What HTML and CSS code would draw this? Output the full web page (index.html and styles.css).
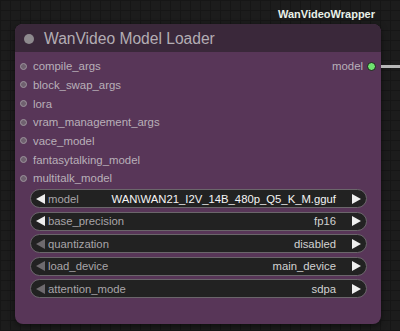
FILE: index.html
```html
<!DOCTYPE html>
<html>
<head>
<meta charset="utf-8">
<link rel="stylesheet" href="styles.css">
</head>
<body>
<div class="canvas">
  <div class="badge-row"><span class="badge">WanVideoWrapper</span></div>
  <div class="node">
    <div class="title"><span class="title-dot"></span><span class="title-text">WanVideo Model Loader</span></div>
    <div class="body">
      <div class="slots">
        <div class="inputs">
          <div class="slot"><span class="dot"></span>compile_args</div>
          <div class="slot"><span class="dot"></span>block_swap_args</div>
          <div class="slot"><span class="dot"></span>lora</div>
          <div class="slot"><span class="dot"></span>vram_management_args</div>
          <div class="slot"><span class="dot"></span>vace_model</div>
          <div class="slot"><span class="dot"></span>fantasytalking_model</div>
          <div class="slot"><span class="dot"></span>multitalk_model</div>
        </div>
        <div class="outputs">
          <div class="slot out">model<span class="odot"></span></div>
        </div>
      </div>
      <div class="widgets">
        <div class="widget"><span class="arr l on"></span><span class="wlabel">model</span><span class="wval bright">WAN\WAN21_I2V_14B_480p_Q5_K_M.gguf</span><span class="arr r"></span></div>
        <div class="widget"><span class="arr l on"></span><span class="wlabel">base_precision</span><span class="wval">fp16</span><span class="arr r"></span></div>
        <div class="widget"><span class="arr l"></span><span class="wlabel">quantization</span><span class="wval">disabled</span><span class="arr r"></span></div>
        <div class="widget"><span class="arr l"></span><span class="wlabel">load_device</span><span class="wval">main_device</span><span class="arr r"></span></div>
        <div class="widget"><span class="arr l"></span><span class="wlabel">attention_mode</span><span class="wval">sdpa</span><span class="arr r"></span></div>
      </div>
    </div>
    <div class="link"></div>
  </div>
</div>
</body>
</html>
```

FILE: styles.css
```css
html, body {
  margin: 0;
  padding: 0;
}
body {
  width: 400px;
  height: 331px;
  overflow: hidden;
  background-color: #1c1c1c;
  background-image:
    linear-gradient(to right, #161616 1px, transparent 1px),
    linear-gradient(to bottom, #161616 1px, transparent 1px);
  background-size: 10px 10px;
  font-family: "Liberation Sans", Arial, sans-serif;
}
.canvas {
  width: 400px;
  height: 331px;
  position: relative;
}
.badge-row {
  height: 24px;
  display: flex;
  justify-content: flex-end;
  align-items: center;
  padding-right: 25px;
  box-sizing: border-box;
}
.badge {
  color: #e8f0e8;
  font-size: 11px;
  font-weight: bold;
  margin-top: 4px;
}
.node {
  position: relative;
  margin-left: 15px;
  width: 366px;
  height: 300px;
  border-radius: 8px;
  background: #583658;
  box-shadow: 0 2px 6px rgba(0,0,0,0.5);
}
.title {
  height: 28px;
  background: #3a283a;
  border-radius: 8px 8px 0 0;
  display: flex;
  align-items: center;
  box-sizing: border-box;
  padding-left: 9px;
}
.title-dot {
  width: 10px;
  height: 10px;
  border-radius: 50%;
  background: #8e8a8e;
  margin-right: 10px;
  margin-top: 1px;
}
.title-text {
  color: #b3adb3;
  font-size: 15.6px;
  margin-top: 1px;
}
.body {
  padding-top: 5px;
}
.slots {
  display: flex;
  justify-content: space-between;
}
.slot {
  height: 18.67px;
  display: flex;
  align-items: center;
  color: #b8b0b8;
  font-size: 11.4px;
}
.inputs .slot {
  padding-left: 5px;
}
.dot {
  width: 5px;
  height: 5px;
  border-radius: 50%;
  border: 1.5px solid #9d949d;
  background: #6e606e;
  margin-right: 6px;
}
.out {
  padding-right: 5px;
}
.odot {
  width: 7px;
  height: 7px;
  border-radius: 50%;
  background: #6fe36f;
  border: 1px solid #1c1c1c;
  margin-left: 4px;
}
.widgets {
  display: flex;
  flex-direction: column;
  gap: 3.5px;
  padding: 1.5px 14px 0 15px;
}
.widget {
  height: 19px;
  box-sizing: border-box;
  border: 1px solid #6b666b;
  border-radius: 10px;
  background: #222222;
  display: flex;
  align-items: center;
  padding: 0 5px 0 5px;
  font-size: 11.3px;
}
.wlabel {
  color: #a9a5a9;
  margin-left: 3px;
}
.wval {
  color: #d2d2d2;
  margin-left: auto;
  margin-right: 16px;
}
.wval.bright {
  color: #f4f4f4;
}
.arr {
  width: 0;
  height: 0;
  border-top: 5px solid transparent;
  border-bottom: 5px solid transparent;
}
.arr.l {
  border-right: 9px solid #6e6a6e;
}
.arr.l.on {
  border-right-color: #eeeeee;
}
.arr.r {
  border-left: 9px solid #eeeeee;
}
.link {
  position: absolute;
  left: 366px;
  top: 40.5px;
  width: 20px;
  height: 3px;
  background: #b8b8b8;
}
```
